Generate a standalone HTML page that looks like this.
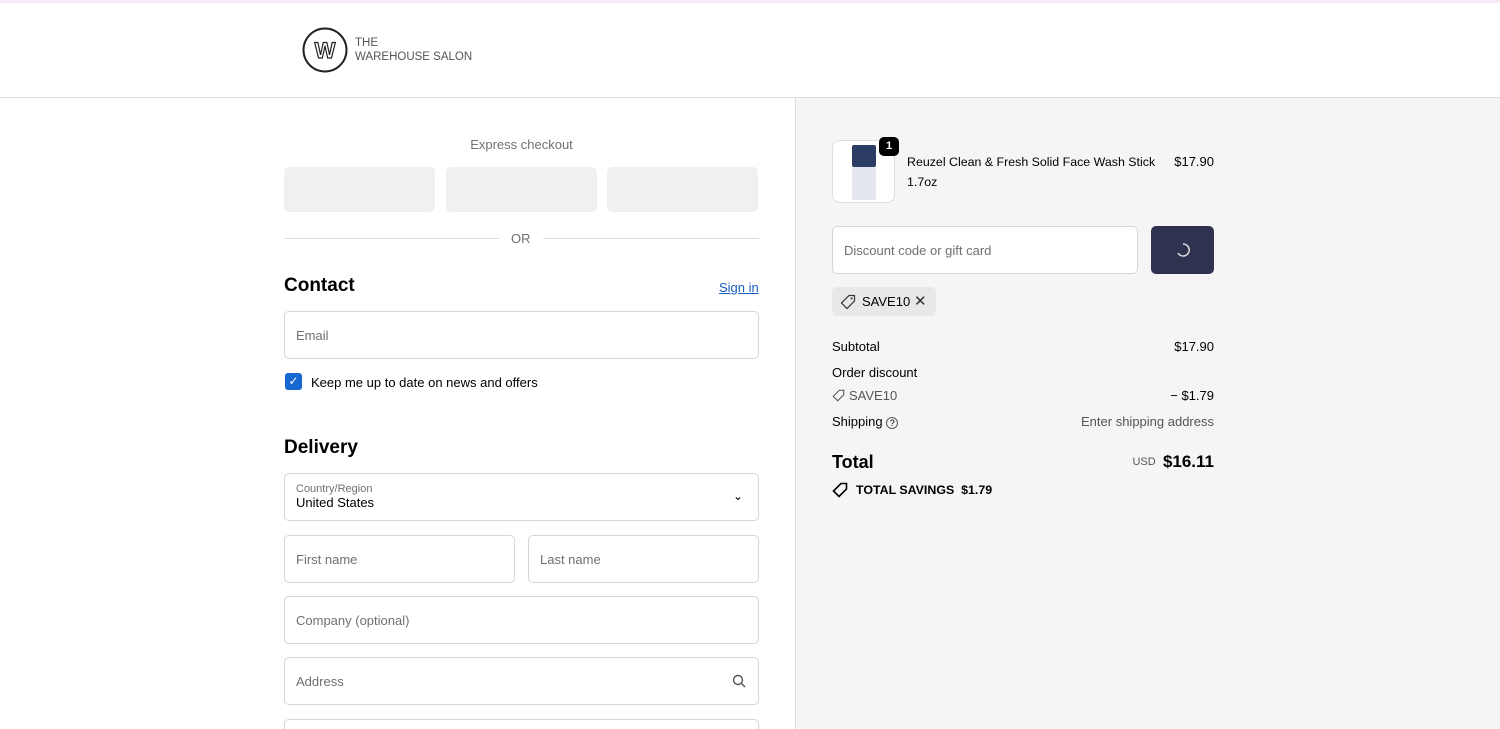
<!DOCTYPE html>
<html style="overflow:hidden;height:729px"><head><style>
*{box-sizing:border-box;margin:0;padding:0}
body{width:1500px;height:729px;overflow:hidden;font-family:"Liberation Sans",sans-serif;color:#000;background:#fff;position:relative;font-size:13px}
.abs{position:absolute}
.top{left:0;top:0;width:1500px;height:3px;background:#f8e8f5}
.hdr{left:0;top:97px;width:1500px;height:1px;background:#dedede}
.right{left:795px;top:98px;width:705px;height:631px;background:#f5f5f5;border-left:1px solid #dedede}
.inp{position:absolute;border:1px solid #d6d6d6;border-radius:5px;background:#fff;color:#707070;font-size:13px;padding-left:11px;display:flex;align-items:center}
.exp{position:absolute;top:167px;height:45px;width:151px;background:#f0f0f0;border-radius:5px}
h2{position:absolute;font-size:19px;font-weight:bold}
.t{position:absolute;font-size:13px;white-space:nowrap}
.r{position:absolute;right:286px;font-size:13px;white-space:nowrap;text-align:right}
</style></head><body>
<div class="abs top"></div>
<svg class="abs" style="left:302px;top:27px" width="46" height="46" viewBox="0 0 46 46"><circle cx="23" cy="23" r="21.5" fill="none" stroke="#222" stroke-width="2"/><text x="23" y="31" text-anchor="middle" font-family="Liberation Sans" font-size="22" font-weight="bold" fill="none" stroke="#222" stroke-width="1.2">W</text></svg>
<div class="abs" style="left:355px;top:36px;font-size:11.5px;color:#555;line-height:14px">THE<br>WAREHOUSE SALON</div>
<div class="abs hdr"></div>
<div class="abs right"></div>

<div class="t" style="left:284px;width:475px;top:137px;text-align:center;color:#707070">Express checkout</div>
<div class="exp" style="left:284px"></div><div class="exp" style="left:446px"></div><div class="exp" style="left:607px"></div>
<div class="abs" style="left:284px;top:238px;width:215px;height:1px;background:#dedede"></div>
<div class="abs" style="left:543px;top:238px;width:216px;height:1px;background:#dedede"></div>
<div class="t" style="left:511px;top:231px;color:#707070">OR</div>
<h2 style="left:284px;top:275px">Contact</h2>
<div class="t" style="left:719px;top:280px;color:#1a5fc1;text-decoration:underline">Sign in</div>
<div class="inp" style="left:284px;top:311px;width:475px;height:48px">Email</div>
<div class="abs" style="left:285px;top:373px;width:17px;height:17px;background:#1667d0;border-radius:3px;color:#fff;font-size:12px;text-align:center;line-height:17px">✓</div>
<div class="t" style="left:311px;top:375px">Keep me up to date on news and offers</div>
<h2 style="left:284px;top:437px">Delivery</h2>
<div class="inp" style="left:284px;top:473px;width:475px;height:48px;display:block;padding-top:9px"><div style="font-size:11px;color:#707070">Country/Region</div><div style="color:#000;font-size:13px">United States</div></div>
<div class="t" style="left:733px;top:489px;font-size:12px">⌄</div>
<div class="inp" style="left:284px;top:535px;width:231px;height:48px">First name</div>
<div class="inp" style="left:528px;top:535px;width:231px;height:48px">Last name</div>
<div class="inp" style="left:284px;top:596px;width:475px;height:48px">Company (optional)</div>
<div class="inp" style="left:284px;top:657px;width:475px;height:48px">Address</div>
<svg class="abs" style="left:732px;top:674px" width="14" height="14" viewBox="0 0 14 14"><circle cx="6" cy="6" r="4.5" fill="none" stroke="#555" stroke-width="1.4"/><path d="M9.5 9.5L13 13" stroke="#555" stroke-width="1.4"/></svg>
<div class="abs" style="left:284px;top:719px;width:475px;height:10px;border:1px solid #d6d6d6;border-bottom:none;border-radius:5px 5px 0 0"></div>

<div class="abs" style="left:832px;top:140px;width:63px;height:63px;background:#fff;border:1px solid #dedede;border-radius:8px"><div style="position:absolute;left:19px;top:4px;width:24px;height:55px;background:#e4e8ee;border-radius:2px"></div><div style="position:absolute;left:19px;top:4px;width:24px;height:22px;background:#2b3d63;border-radius:2px"></div></div>
<div class="abs" style="left:879px;top:137px;width:20px;height:19px;background:#000;color:#fff;border-radius:5px;font-size:11px;font-weight:bold;text-align:center;line-height:19px">1</div>
<div class="t" style="left:907px;top:152px;line-height:20px;font-size:12.4px">Reuzel Clean &amp; Fresh Solid Face Wash Stick<br>1.7oz</div>
<div class="r" style="top:154px">$17.90</div>
<div class="inp" style="left:832px;top:226px;width:306px;height:48px">Discount code or gift card</div>
<div class="abs" style="left:1151px;top:226px;width:63px;height:48px;background:#2f3350;border-radius:5px"><svg style="position:absolute;left:24px;top:16px" width="16" height="16" viewBox="0 0 16 16"><path d="M8 2A6 6 0 1 1 3 11" fill="none" stroke="#ddd" stroke-width="1.5"/></svg></div>
<div class="abs" style="left:832px;top:287px;width:104px;height:29px;background:#e8e8e8;border-radius:5px"></div>
<svg class="abs" style="left:840px;top:294px" width="16" height="16" viewBox="0 0 16 16"><path d="M9 1.5h5.5V7L7 14.5 1.5 9z" fill="none" stroke="#333" stroke-width="1.2"/><circle cx="11.5" cy="4.5" r="1" fill="#333"/></svg>
<div class="t" style="left:862px;top:294px">SAVE10</div>
<div class="t" style="left:914px;top:292px;font-size:15px;color:#333">✕</div>
<div class="t" style="left:832px;top:339px">Subtotal</div><div class="r" style="top:339px">$17.90</div>
<div class="t" style="left:832px;top:365px">Order discount</div>
<svg class="abs" style="left:832px;top:389px" width="13" height="13" viewBox="0 0 16 16"><path d="M9 1.5h5.5V7L7 14.5 1.5 9z" fill="none" stroke="#555" stroke-width="1.3"/></svg>
<div class="t" style="left:849px;top:388px;color:#555">SAVE10</div><div class="r" style="top:388px">− $1.79</div>
<div class="t" style="left:832px;top:414px">Shipping <span style="display:inline-block;width:12px;height:12px;border:1px solid #555;border-radius:50%;font-size:9px;text-align:center;line-height:11px">?</span></div>
<div class="r" style="top:414px;color:#555">Enter shipping address</div>
<div class="t" style="left:832px;top:452px;font-size:18px;font-weight:bold">Total</div>
<div class="r" style="top:452px"><span style="font-size:11px;color:#555;vertical-align:2px">USD</span>&nbsp; <span style="font-size:17px;font-weight:bold">$16.11</span></div>
<svg class="abs" style="left:832px;top:482px" width="16" height="16" viewBox="0 0 16 16"><path d="M9 1.5h5.5V7L7 14.5 1.5 9z" fill="none" stroke="#000" stroke-width="1.6"/></svg>
<div class="t" style="left:856px;top:483px;font-weight:bold;font-size:12.4px">TOTAL SAVINGS&nbsp; $1.79</div>
</body></html>
